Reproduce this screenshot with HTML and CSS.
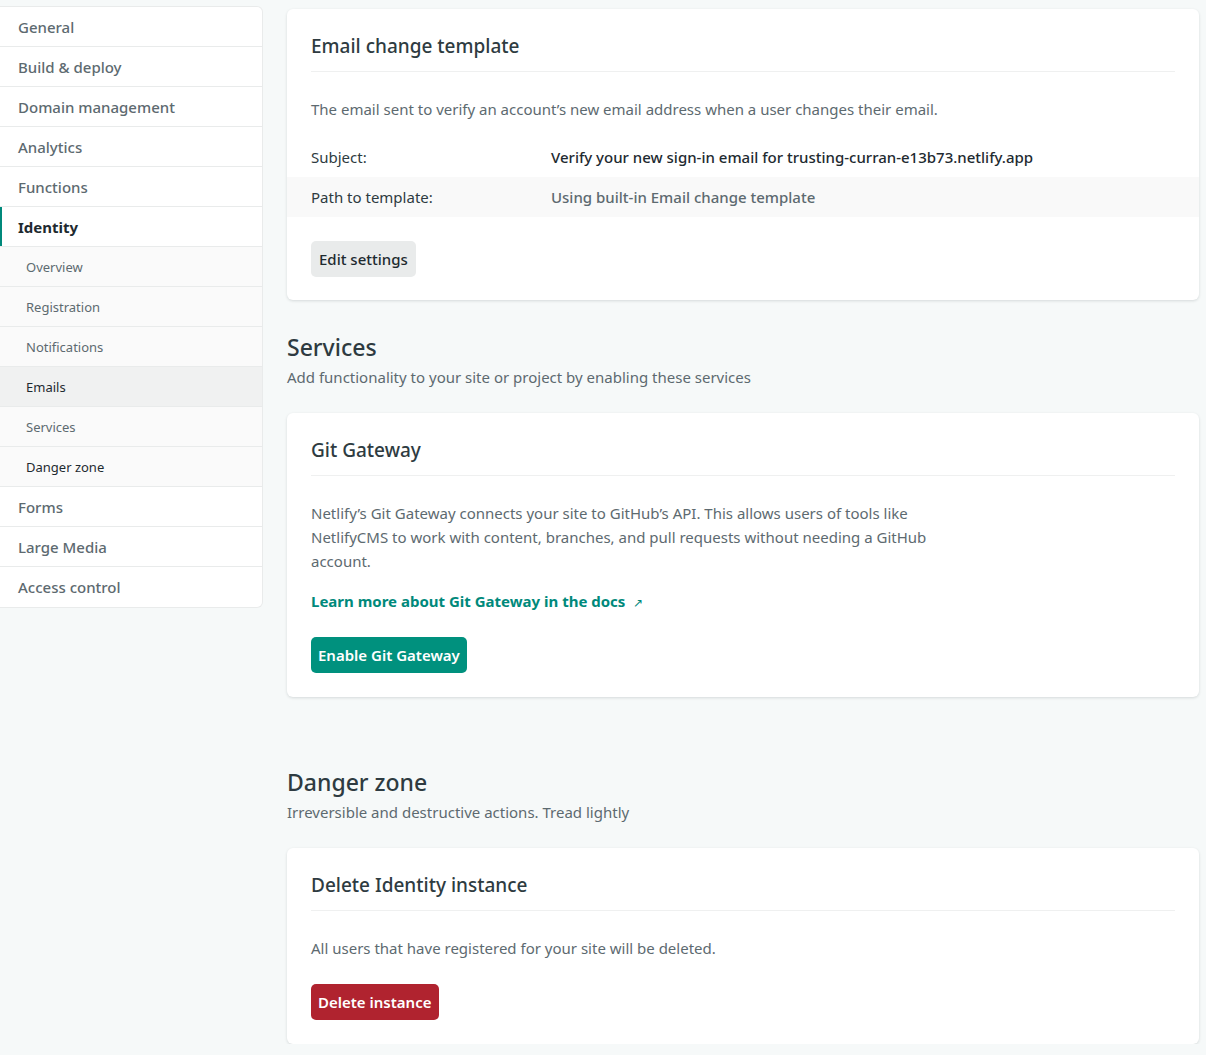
FILE: index.html
```html
<!DOCTYPE html>
<html lang="en">
<head>
<meta charset="utf-8">
<title>Identity settings</title>
<link rel="stylesheet" href="styles.css">
</head>
<body>
<div class="layout">
  <nav class="sidenav">
    <a class="nav-item">General</a>
    <a class="nav-item">Build &amp; deploy</a>
    <a class="nav-item">Domain management</a>
    <a class="nav-item">Analytics</a>
    <a class="nav-item">Functions</a>
    <a class="nav-item active">Identity</a>
    <a class="nav-sub">Overview</a>
    <a class="nav-sub">Registration</a>
    <a class="nav-sub">Notifications</a>
    <a class="nav-sub current">Emails</a>
    <a class="nav-sub">Services</a>
    <a class="nav-sub dark">Danger zone</a>
    <a class="nav-item">Forms</a>
    <a class="nav-item">Large Media</a>
    <a class="nav-item last">Access control</a>
  </nav>

  <main class="main">
    <section class="card first">
      <h3 class="card-title">Email change template</h3>
      <p class="card-text">The email sent to verify an account’s new email address when a user changes their email.</p>
      <dl class="kv">
        <div class="kv-row">
          <dt>Subject:</dt>
          <dd class="strong">Verify your new sign-in email for trusting-curran-e13b73.netlify.app</dd>
        </div>
        <div class="kv-row alt">
          <dt>Path to template:</dt>
          <dd class="muted">Using built-in Email change template</dd>
        </div>
      </dl>
      <button class="btn btn-default">Edit settings</button>
    </section>

    <header class="section-head">
      <h2>Services</h2>
      <p>Add functionality to your site or project by enabling these services</p>
    </header>

    <section class="card">
      <h3 class="card-title">Git Gateway</h3>
      <p class="card-text narrow">Netlify’s Git Gateway connects your site to GitHub’s API. This allows users of tools like NetlifyCMS to work with content, branches, and pull requests without needing a GitHub account.</p>
      <a class="link">Learn more about Git Gateway in the docs <span class="arrow">↗</span></a>
      <button class="btn btn-primary">Enable Git Gateway</button>
    </section>

    <header class="section-head danger-head">
      <h2>Danger zone</h2>
      <p>Irreversible and destructive actions. Tread lightly</p>
    </header>

    <section class="card">
      <h3 class="card-title">Delete Identity instance</h3>
      <p class="card-text">All users that have registered for your site will be deleted.</p>
      <button class="btn btn-danger">Delete instance</button>
    </section>
  </main>
</div>
</body>
</html>
```

FILE: styles.css
```css
* { box-sizing: border-box; }

html, body {
  margin: 0;
  padding: 0;
  background: #f6f9f9;
  font-family: "Noto Sans", "Open Sans", sans-serif;
  color: #2e3b41;
}

.layout {
  display: flex;
  align-items: flex-start;
  gap: 24px;
  padding-right: 7px;
}

.sidenav {
  width: 263px;
  flex: none;
  margin-top: 6px;
  background: #fff;
  border: 1px solid #e9ebeb;
  border-left: none;
  border-radius: 0 6px 6px 0;
  display: flex;
  flex-direction: column;
}

.nav-item, .nav-sub {
  display: flex;
  align-items: center;
  height: 40px;
  border-bottom: 1px solid #e9ebeb;
  text-decoration: none;
}

.nav-item {
  padding-left: 18px;
  font-size: 15px;
  color: #5d6a70;
  font-weight: 500;
}

.nav-item.last { border-bottom: none; }

.nav-item.active {
  color: #1e2a30;
  font-weight: 700;
  box-shadow: inset 2px 0 0 #00897b;
}

.nav-sub {
  padding-left: 26px;
  font-size: 13px;
  background: #fafafa;
  color: #5d6a70;
}

.nav-sub.current {
  background: #f0f1f1;
  color: #1e2a30;
}

.nav-sub.dark { color: #1e2a30; }

.main {
  flex: 1;
  display: flex;
  flex-direction: column;
  padding-top: 9px;
}

.card {
  background: #fff;
  border-radius: 6px;
  box-shadow: 0 1px 3px rgba(14, 30, 37, 0.14);
  padding: 22px 24px 24px;
  display: flex;
  flex-direction: column;
  align-items: flex-start;
}

.card.first { padding-bottom: 23px; }

.card-title {
  margin: 0;
  font-size: 19px;
  font-weight: 500;
  line-height: 30px;
  padding-bottom: 10px;
  border-bottom: 1px solid #eff0f0;
  align-self: stretch;
  color: #2e3b41;
}

.card-text {
  margin: 25px 0 0;
  font-size: 15px;
  line-height: 24px;
  color: #5d6a70;
}

.card-text.narrow { max-width: 625px; }

.kv {
  margin: 16px -24px 0;
  align-self: stretch;
}

.kv-row {
  display: flex;
  align-items: center;
  height: 40px;
  padding: 0 24px;
  font-size: 15px;
}

.kv-row.alt { background: #f9f9f9; }

.kv-row dt {
  width: 240px;
  color: #2e3b41;
}

.kv-row dd {
  margin: 0;
  font-weight: 500;
}

.kv-row dd.strong { color: #1e2a30; }
.kv-row dd.muted { color: #5d6a70; }

.btn {
  font-family: inherit;
  border: none;
  border-radius: 5px;
  height: 36px;
  padding: 0 7px;
  font-size: 15px;
  font-weight: 600;
  cursor: pointer;
}

.btn-default {
  margin-top: 24px;
  padding: 0 8px;
  background: #e9ebeb;
  color: #1e2a30;
  font-weight: 500;
}

.btn-primary {
  margin-top: 22px;
  background: #00917e;
  color: #fff;
}

.btn-danger {
  margin-top: 24px;
  background: #b0232f;
  color: #fff;
}

.link {
  margin-top: 16px;
  font-size: 15px;
  font-weight: 700;
  line-height: 24px;
  color: #00897b;
  text-decoration: none;
}

.arrow {
  font-weight: 400;
  font-size: 12px;
  margin-left: 4px;
}

.section-head {
  margin: 31px 0 24px;
}

.danger-head { margin-top: 69px; }

.section-head h2 {
  margin: 0;
  font-size: 23px;
  font-weight: 500;
  line-height: 32px;
  color: #2e3b41;
}

.section-head p {
  margin: 2px 0 0;
  font-size: 15px;
  line-height: 24px;
  color: #5d6a70;
}
```
